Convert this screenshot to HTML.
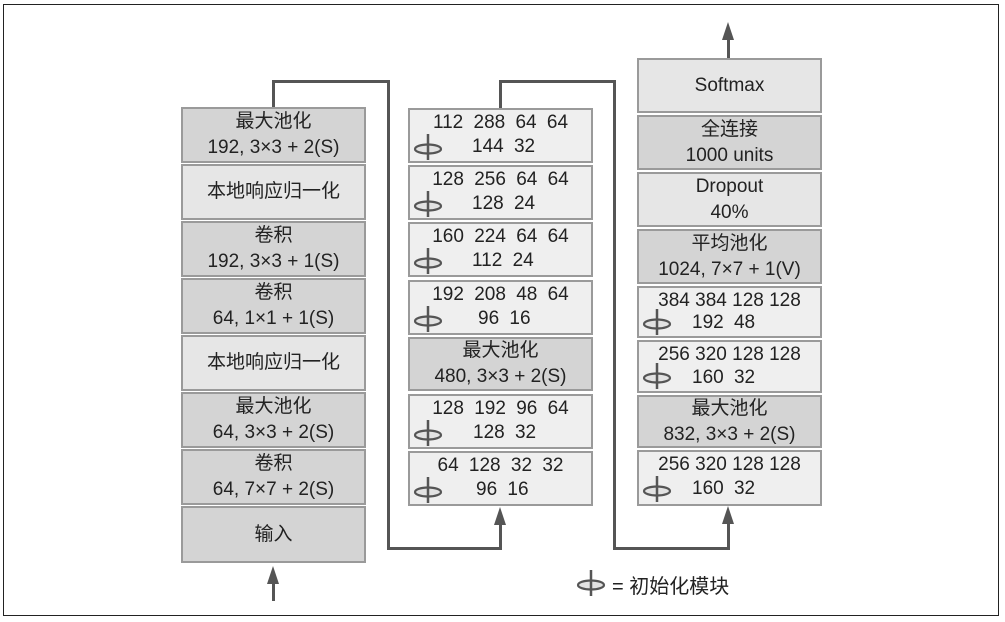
<!DOCTYPE html>
<html><head><meta charset="utf-8"><style>
body{margin:0;width:1005px;height:622px;background:#fff;position:relative;overflow:hidden;font-family:"Liberation Sans","Noto Sans CJK SC",sans-serif;color:#222}
.frame{position:absolute;left:3px;top:4px;width:996px;height:612px;border:1px solid #222;box-sizing:border-box}
.b{position:absolute;width:185px;box-sizing:border-box;border:2px solid #9a9a9a;font-size:19px;text-align:center;line-height:26px;display:flex;flex-direction:column;justify-content:center}
.d{background:#d4d4d4}.l{background:#e6e6e6}.i{background:#efefef;display:block}
.i .t{position:absolute;left:0;right:0;top:0px;text-align:center;word-spacing:5px;white-space:pre}
.i .s{position:absolute;top:24px;word-spacing:5px;white-space:pre}
.i svg{position:absolute;left:3px;top:23px}
.ln{position:absolute;background:#555}
.ar{position:absolute;width:0;height:0;border-left:6px solid transparent;border-right:6px solid transparent;border-bottom:18px solid #555}
</style></head><body>
<div class="frame"></div>
<svg width="0" height="0" style="position:absolute"><defs><g id="ic"><ellipse cx="15" cy="16" rx="13" ry="4.5" fill="#e2e2e2" stroke="#555" stroke-width="2.2"/><line x1="15" y1="1" x2="15" y2="27" stroke="#555" stroke-width="2.5"/></g></defs></svg>

<!-- connectors -->
<div class="ln" style="left:272px;top:80px;width:3px;height:28px"></div>
<div class="ln" style="left:272px;top:80px;width:118px;height:3px"></div>
<div class="ln" style="left:387px;top:80px;width:3px;height:470px"></div>
<div class="ln" style="left:387px;top:547px;width:115px;height:3px"></div>
<div class="ln" style="left:499px;top:520px;width:3px;height:30px"></div>
<div class="ar" style="left:494px;top:507px"></div>

<div class="ln" style="left:499px;top:80px;width:3px;height:28px"></div>
<div class="ln" style="left:499px;top:80px;width:117px;height:3px"></div>
<div class="ln" style="left:613px;top:80px;width:3px;height:470px"></div>
<div class="ln" style="left:613px;top:547px;width:117px;height:3px"></div>
<div class="ln" style="left:727px;top:520px;width:3px;height:30px"></div>
<div class="ar" style="left:722px;top:506px"></div>

<div class="ln" style="left:727px;top:36px;width:3px;height:22px"></div>
<div class="ar" style="left:722px;top:22px"></div>
<div class="ln" style="left:272px;top:580px;width:3px;height:21px"></div>
<div class="ar" style="left:267px;top:566px"></div>

<!-- left column -->
<div class="b d" style="left:181px;top:107px;height:56px">最大池化<br>192, 3×3 + 2(S)</div>
<div class="b l" style="left:181px;top:164px;height:56px">本地响应归一化</div>
<div class="b d" style="left:181px;top:221px;height:56px">卷积<br>192, 3×3 + 1(S)</div>
<div class="b d" style="left:181px;top:278px;height:56px">卷积<br>64, 1×1 + 1(S)</div>
<div class="b l" style="left:181px;top:335px;height:56px">本地响应归一化</div>
<div class="b d" style="left:181px;top:392px;height:56px">最大池化<br>64, 3×3 + 2(S)</div>
<div class="b d" style="left:181px;top:449px;height:56px">卷积<br>64, 7×7 + 2(S)</div>
<div class="b d" style="left:181px;top:506px;height:57px">输入</div>

<!-- middle column -->
<div class="b i" style="left:408px;top:108px;height:55px"><div class="t">112 288 64 64</div><svg width="30" height="28"><use href="#ic"/></svg><div class="s" style="left:62px">144 32</div></div>
<div class="b i" style="left:408px;top:165px;height:55px"><div class="t">128 256 64 64</div><svg width="30" height="28"><use href="#ic"/></svg><div class="s" style="left:62px">128 24</div></div>
<div class="b i" style="left:408px;top:222px;height:55px"><div class="t">160 224 64 64</div><svg width="30" height="28"><use href="#ic"/></svg><div class="s" style="left:62px">112 24</div></div>
<div class="b i" style="left:408px;top:280px;height:55px"><div class="t">192 208 48 64</div><svg width="30" height="28"><use href="#ic"/></svg><div class="s" style="left:68px">96 16</div></div>
<div class="b d" style="left:408px;top:337px;height:54px">最大池化<br>480, 3×3 + 2(S)</div>
<div class="b i" style="left:408px;top:394px;height:55px"><div class="t">128 192 96 64</div><svg width="30" height="28"><use href="#ic"/></svg><div class="s" style="left:63px">128 32</div></div>
<div class="b i" style="left:408px;top:451px;height:55px"><div class="t">64 128 32 32</div><svg width="30" height="28"><use href="#ic"/></svg><div class="s" style="left:66px">96 16</div></div>

<!-- right column -->
<div class="b l" style="left:637px;top:58px;height:55px">Softmax</div>
<div class="b d" style="left:637px;top:115px;height:55px">全连接<br>1000 units</div>
<div class="b l" style="left:637px;top:172px;height:55px">Dropout<br>40%</div>
<div class="b d" style="left:637px;top:229px;height:55px">平均池化<br>1024, 7×7 + 1(V)</div>
<div class="b i" style="left:637px;top:286px;height:52px"><div class="t" style="word-spacing:0">384 384 128 128</div><svg width="30" height="28" style="top:20px"><use href="#ic"/></svg><div class="s" style="left:53px;top:22px">192 48</div></div>
<div class="b i" style="left:637px;top:340px;height:53px"><div class="t" style="word-spacing:0">256 320 128 128</div><svg width="30" height="28" style="top:20px"><use href="#ic"/></svg><div class="s" style="left:53px;top:23px">160 32</div></div>
<div class="b d" style="left:637px;top:395px;height:53px">最大池化<br>832, 3×3 + 2(S)</div>
<div class="b i" style="left:637px;top:450px;height:56px"><div class="t" style="word-spacing:0">256 320 128 128</div><svg width="30" height="28"><use href="#ic"/></svg><div class="s" style="left:53px">160 32</div></div>

<!-- legend -->
<svg width="30" height="28" style="position:absolute;left:576px;top:569px"><use href="#ic"/></svg>
<div style="position:absolute;left:612px;top:570px;font-size:20px;white-space:pre">= 初始化模块</div>
</body></html>
